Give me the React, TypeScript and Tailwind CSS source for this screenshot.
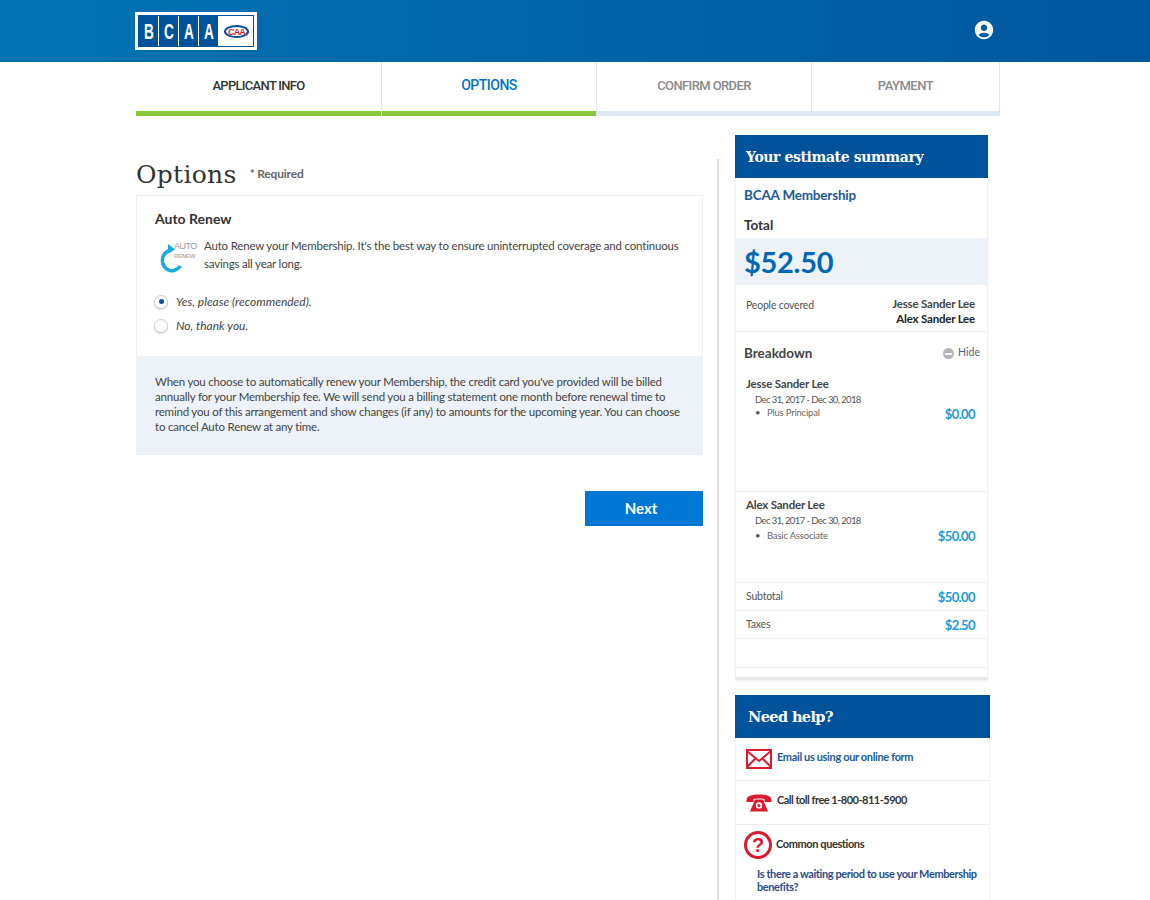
import React from 'react';
import { MdAccountCircle } from 'react-icons/md';

const STEPS = [
  { label: 'APPLICANT INFO', width: 'w-[245px]', text: 'text-[13px] tracking-[-0.7px] text-[#333333]', bar: 'bg-[#8cc63f]' },
  { label: 'OPTIONS', width: 'w-[215px]', text: 'text-[14px] tracking-[-0.5px] text-[#0072c6]', bar: 'bg-[#8cc63f]' },
  { label: 'CONFIRM ORDER', width: 'w-[215px]', text: 'text-[13px] tracking-[-0.6px] text-[#8a8a8a]', bar: 'bg-[#dfe9f3]' },
  { label: 'PAYMENT', width: 'w-[189px]', text: 'text-[13px] tracking-[-0.5px] text-[#8a8a8a]', bar: 'bg-[#dfe9f3]' },
];

function Logo() {
  return (
    <div className="h-[38px] w-[122px] border-[3px] border-white bg-white">
      <div className="flex h-full gap-px border border-[#00529b] bg-white">
        {['B', 'C', 'A', 'A'].map((l, i) => (
          <div key={i} className="flex h-full w-[19px] items-center justify-center bg-[#00529b] font-['Liberation_Sans'] text-[22px] font-bold text-white">
            <span className="inline-block scale-x-[0.62]">{l}</span>
          </div>
        ))}
        <div className="flex flex-1 items-center justify-center bg-white">
          <svg width="25" height="13" viewBox="0 0 25 13">
            <ellipse cx="12.500" cy="6.500" rx="11.500" ry="5.500" fill="#fff" stroke="#0a4f9c" strokeWidth="2" />
            <text x="12.500" y="9.500" textAnchor="middle" fontFamily="Liberation Sans" fontWeight="700" fontSize="9" fill="#d8232a" letterSpacing="-0.8">CAA</text>
          </svg>
        </div>
      </div>
    </div>
  );
}

function AutoRenewIcon() {
  return (
    <div className="relative h-[36px] w-[45px] shrink-0">
      <svg className="absolute left-0 top-[3px]" width="26" height="33" viewBox="0 0 26 33">
        <path d="M12 7 C5 9 3 14 3.500 19 C4.500 25 10 29 15 27.500 C18 26.700 20 25 21.500 23" fill="none" stroke="#1ba9e1" strokeWidth="3.500" />
        <path d="M9 1 L16 6.500 L9 10.500 Z" fill="#1ba9e1" />
      </svg>
      <span className="absolute left-[15px] top-[1px] font-['Liberation_Sans'] text-[9px] leading-[11px] tracking-[-0.5px] text-[#9a9a9a]">AUTO</span>
      <span className="absolute left-[15px] top-[12px] font-['Liberation_Sans'] text-[6px] font-bold leading-[8px] tracking-[-0.2px] text-[#b5b5b5]">RENEW</span>
    </div>
  );
}

function Radio({ checked, label }: { checked?: boolean; label: string }) {
  return (
    <div className="ml-[-1px] flex h-[25px] items-center gap-[8px]">
      <span className="flex h-[14px] w-[14px] items-center justify-center rounded-full border border-[#c4d3d8] bg-white shadow-[0_1px_1px_rgba(0,0,0,0.15)]">
        {checked && <span className="h-[5px] w-[5px] rounded-full bg-[#00529b]" />}
      </span>
      <span className="text-[12px] italic text-[#444444]">{label}</span>
    </div>
  );
}

function Person({ name, dates, plan, amount, height, nameTop, planLine, amountTop }: { name: string; dates: string; plan: string; amount: string; height: string; nameTop: string; planLine: string; amountTop: string }) {
  return (
    <div className={`${height} ${nameTop} border-b border-[#eeeeee] pl-[10px] pr-[12px]`}>
      <p className="text-[11.5px] font-bold leading-[14px] tracking-[-0.2px] text-[#444444]">{name}</p>
      <div className="flex justify-between">
        <div className="pl-[9px] text-[9.5px] leading-[15px] text-[#555555]">
          <p className="mt-[1px] tracking-[-0.6px]">{dates}</p>
          <p className={`flex ${planLine}`}><span className="w-[12px]">•</span><span className="tracking-[-0.2px] text-[#666666]">{plan}</span></p>
        </div>
        <p className={`${amountTop} text-[13px] font-bold tracking-[-0.6px] text-[#1a9ae0]`}>{amount}</p>
      </div>
    </div>
  );
}

function SumRow({ label, amount }: { label: string; amount: string }) {
  return (
    <div className="flex h-[28px] items-center justify-between border-b border-[#eeeeee] pl-[10px] pr-[12px]">
      <span className="text-[10.5px] tracking-[-0.2px] text-[#555555]">{label}</span>
      <span className="mt-[2px] text-[13px] font-bold tracking-[-0.6px] text-[#1a9ae0]">{amount}</span>
    </div>
  );
}

export default function App() {
  return (
    <div className="h-[900px] overflow-hidden bg-white font-['Lato',sans-serif] text-[#333333]">
      {/* Header */}
      <header className="flex h-[62px] items-start justify-between bg-gradient-to-r from-[#0073b2] to-[#00589f] pl-[135px] pr-[155px]">
        <div className="mt-[12px]"><Logo /></div>
        <MdAccountCircle className="mt-[19px] text-white" size={22} />
      </header>

      {/* Steps */}
      <nav className="ml-[136px] flex w-[864px]">
        {STEPS.map((s, i) => (
          <div key={s.label} className={`${s.width} flex h-[54px] flex-col ${i > 0 ? 'border-l border-[#e6e6e6]' : ''} ${i === 3 ? 'border-r' : ''}`}>
            <div className={`flex flex-1 items-center justify-center pb-[2px] font-['Roboto'] font-medium ${s.text}`}>{s.label}</div>
            <div className={`h-[5px] ${s.bar}`} />
          </div>
        ))}
      </nav>

      <div className="ml-[136px] flex items-start">
        {/* Left column */}
        <main className="w-[567px] pt-[43px]">
          <div className="flex h-[36px] items-center gap-[13px]">
            <h1 className="mt-[-4px] font-['DejaVu_Serif'] text-[25px] font-normal tracking-[0.3px] text-[#333333]">Options</h1>
            <span className="mt-[-6px] text-[12px] font-bold tracking-[-0.2px] text-[#666666]">* Required</span>
          </div>

          <section className="h-[161px] border border-b-0 border-[#eeeeee] px-[18px] pt-[14px]">
            <h2 className="text-[14px] font-bold leading-[18px] text-[#333333]">Auto Renew</h2>
            <div className="mt-[9px] flex">
              <div className="pl-[4px] pt-[3px]"><AutoRenewIcon /></div>
              <p className="w-[486px] text-[11.5px] leading-[18px] tracking-[-0.19px] text-[#444444]">
                Auto Renew your Membership. It's the best way to ensure uninterrupted coverage and continuous savings all year long.
              </p>
            </div>
            <div className="mt-[13px]">
              <Radio checked label="Yes, please (recommended)." />
              <div className="mt-[-1px]"><Radio label="No, thank you." /></div>
            </div>
          </section>
          <section className="h-[99px] bg-[#edf2f8] px-[19px] pt-[18px] text-[11.5px] leading-[15px] tracking-[-0.2px] text-[#444444]">
            When you choose to automatically renew your Membership, the credit card you've provided will be billed annually for your Membership fee. We will send you a billing statement one month before renewal time to remind you of this arrangement and show changes (if any) to amounts for the upcoming year. You can choose to cancel Auto Renew at any time.
          </section>

          <div className="mt-[36px] flex justify-end">
            <button className="h-[35px] w-[118px] bg-[#0077d4] pr-[6px] text-[15px] font-bold text-white">Next</button>
          </div>
        </main>

        {/* Divider */}
        <div className="ml-[14px] mt-[43px] h-[741px] w-[2px] bg-[#dddddd]" />

        {/* Right column */}
        <aside className="ml-[16px] w-[255px] pt-[19px]">
          <div className="w-[253px] border-b-[3px] border-[#e8e8e8] shadow-[0_1px_2px_rgba(0,0,0,0.06)]">
            <div className="flex h-[43px] items-center bg-[#00529b] pl-[11px] pt-[1px] font-['DejaVu_Serif'] text-[14px] font-bold tracking-[-0.4px] text-white">Your estimate summary</div>
            <div className="border-x border-[#f2f2f2]">
              <p className="pl-[8px] pt-[9px] text-[13.5px] font-bold leading-[16px] tracking-[-0.2px] text-[#1d5a96]">BCAA Membership</p>
              <p className="pl-[8px] pt-[14px] text-[13.5px] font-bold leading-[16px] text-[#333333]">Total</p>
              <div className="mt-[5px] flex h-[47px] items-center bg-[#edf2f8] pl-[8px] text-[29px] font-bold tracking-[-0.3px] text-[#0068b3]">$52.50</div>
              <div className="flex h-[47px] justify-between border-b border-[#eeeeee] pl-[10px] pr-[12px] pt-[11px]">
                <span className="pt-[3px] text-[10.5px] leading-[13px] tracking-[-0.2px] text-[#555555]">People covered</span>
                <div className="text-right text-[11.5px] font-bold leading-[15px] tracking-[-0.2px]">
                  <p className="text-[#444444]">Jesse Sander Lee</p>
                  <p className="text-[#222222]">Alex Sander Lee</p>
                </div>
              </div>
              <div className="flex h-[44px] items-start justify-between pl-[8px] pr-[7px] pt-[12px]">
                <span className="text-[13.5px] font-bold leading-[18px] text-[#444444]">Breakdown</span>
                <span className="mt-[1px] flex items-center gap-[4px] text-[10.5px] leading-[14px] text-[#555f7a]">
                  <span className="mt-[3px] flex h-[11px] w-[11px] items-center justify-center rounded-full bg-[#b5b5b5]"><span className="h-[2px] w-[7px] bg-white" /></span>
                  Hide
                </span>
              </div>
              <Person name="Jesse Sander Lee" dates="Dec 31, 2017 - Dec 30, 2018" plan="Plus Principal" amount="$0.00" height="h-[116px]" nameTop="pt-[1px]" planLine="mt-[-2px]" amountTop="mt-[14px]" />
              <Person name="Alex Sander Lee" dates="Dec 31, 2017 - Dec 30, 2018" plan="Basic Associate" amount="$50.00" height="h-[91px]" nameTop="pt-[6px]" planLine="mt-0" amountTop="mt-[15px]" />
              <SumRow label="Subtotal" amount="$50.00" />
              <SumRow label="Taxes" amount="$2.50" />
              <div className="h-[29px] border-b border-[#eeeeee]" />
              <div className="h-[9px]" />
            </div>
          </div>

          {/* Need help */}
          <div className="mt-[15px] flex h-[43px] items-center bg-[#00529b] pl-[13px] font-['DejaVu_Serif'] text-[14.5px] font-bold tracking-[-0.6px] text-white">Need help?</div>
          <div className="border-x border-[#f4f4f4] pb-[20px]">
            <div className="flex h-[43px] items-center gap-[5px] border-b border-[#eeeeee] pl-[10px]">
              <svg width="26" height="20" viewBox="0 0 26 20">
                <rect x="1" y="1" width="24" height="18" fill="#fff" stroke="#dc1c2e" strokeWidth="2" />
                <path d="M1 2 L13 12 L25 2 M1 18 L10 9 M25 18 L16 9" fill="none" stroke="#dc1c2e" strokeWidth="2" />
              </svg>
              <span className="mb-[4px] text-[11px] font-bold tracking-[-0.35px] text-[#1d5a96]">Email us using our online form</span>
            </div>
            <div className="flex h-[44px] items-center gap-[5px] border-b border-[#eeeeee] pl-[10px]">
              <svg width="26" height="18" viewBox="0 0 26 18">
                <path d="M0.500 6 C0.500 2 6 0.500 13 0.500 C20 0.500 25.500 2 25.500 6 L25.500 8 L18.500 8 L18.500 5 C16 4.300 10 4.300 7.500 5 L7.500 8 L0.500 8 Z" fill="#dc1c2e" />
                <path d="M9 5.500 L17 5.500 L22 17.500 L4 17.500 Z" fill="#dc1c2e" />
                <circle cx="13" cy="11.500" r="3.200" fill="#fff" />
                <circle cx="13" cy="11.500" r="1.500" fill="#dc1c2e" />
              </svg>
              <span className="mb-[4px] text-[11px] font-bold tracking-[-0.5px] text-[#333333]">Call toll free 1-800-811-5900</span>
            </div>
            <div className="flex items-center gap-[5px] pl-[8px] pt-[6px]">
              <span className="flex h-[28px] w-[28px] items-center justify-center rounded-full border-[3px] border-[#dc1c2e] font-['Liberation_Sans'] text-[20px] font-bold text-[#dc1c2e]">?</span>
              <span className="ml-[-1px] mb-[2px] text-[11px] font-bold tracking-[-0.4px] text-[#333333]">Common questions</span>
            </div>
            <p className="pl-[21px] pr-[10px] pt-[8px] text-[11px] font-bold leading-[13px] tracking-[-0.4px] text-[#2b4c8c]">Is there a waiting period to use your Membership benefits?</p>
          </div>
        </aside>
      </div>
    </div>
  );
}
